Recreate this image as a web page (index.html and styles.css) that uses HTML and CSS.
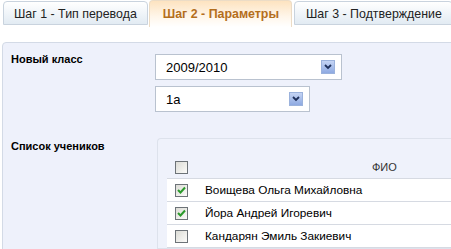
FILE: index.html
```html
<!DOCTYPE html>
<html lang="ru">
<head>
    <meta charset="UTF-8">
    <title>Перевод учеников</title>
    <link rel="stylesheet" href="styles.css">
</head>
<body>
    <div class="tabs">
        <div class="tab first">Шаг 1 - Тип перевода</div>
        <div class="tab active">Шаг 2 - Параметры</div>
        <div class="tab last">Шаг 3 - Подтверждение</div>
    </div>

    <div class="panel">
        <div class="field-label">Новый класс</div>
        <div class="controls">
            <div class="select wide">
                <span>2009/2010</span>
                <span class="arrow"><svg width="8" height="6" viewBox="0 0 8 6"><path d="M1 1 L4 4 L7 1" fill="none" stroke="#1d2f5a" stroke-width="1.8"/></svg></span>
            </div>
            <div class="select narrow">
                <span>1а</span>
                <span class="arrow"><svg width="8" height="6" viewBox="0 0 8 6"><path d="M1 1 L4 4 L7 1" fill="none" stroke="#1d2f5a" stroke-width="1.8"/></svg></span>
            </div>
        </div>

        <div class="field-label second">Список учеников</div>
        <div class="students">
            <div class="row head">
                <div class="cell-check"><span class="check"></span></div>
                <div class="cell-name">ФИО</div>
            </div>
            <div class="row">
                <div class="cell-check"><span class="check on"><svg width="9" height="8" viewBox="0 0 9 8"><path d="M1 4 L3.5 6.5 L8 1.5" fill="none" stroke="#2b9a2b" stroke-width="2"/></svg></span></div>
                <div class="cell-name">Воищева Ольга Михайловна</div>
            </div>
            <div class="row">
                <div class="cell-check"><span class="check on"><svg width="9" height="8" viewBox="0 0 9 8"><path d="M1 4 L3.5 6.5 L8 1.5" fill="none" stroke="#2b9a2b" stroke-width="2"/></svg></span></div>
                <div class="cell-name">Йора Андрей Игоревич</div>
            </div>
            <div class="row">
                <div class="cell-check"><span class="check"></span></div>
                <div class="cell-name">Кандарян Эмиль Закиевич</div>
            </div>
        </div>
    </div>
</body>
</html>
```

FILE: styles.css
```css
* {
    margin: 0;
    padding: 0;
    box-sizing: border-box;
}

body {
    font-family: 'Liberation Sans', Arial, sans-serif;
    font-size: 12px;
    color: #000;
    background: #fff;
    overflow: hidden;
}

.tabs {
    display: flex;
    align-items: flex-start;
    padding-left: 3px;
    gap: 1px;
    height: 42px;
}

.tab {
    margin-top: 1px;
    height: 24px;
    padding: 5px 10px 0;
    border: 1px solid #c9d3de;
    border-radius: 4px 4px 0 0;
    background: linear-gradient(#ffffff, #e2ebf3);
    color: #222;
    font-size: 12.4px;
    white-space: nowrap;
}

.tab.last {
    margin-left: 1px;
    padding: 5px 10px 0 11px;
}

.tab.active {
    margin-top: 0;
    height: 27px;
    padding: 6px 12px 0 13px;
    border-color: #ecdcc6;
    border-bottom: none;
    background: linear-gradient(#fde3c0, #fff6ea 60%, #ffffff);
    color: #b46e1c;
    font-weight: bold;
}

.panel {
    display: grid;
    grid-template-columns: 144px 1fr;
    align-content: start;
    row-gap: 26px;
    margin-left: 2px;
    width: 600px;
    min-height: 240px;
    padding: 11px 0 0 8px;
    border: 1px solid #d3dae6;
    border-radius: 4px 0 0 0;
    background: #eef1fb;
}

.field-label {
    font-size: 11px;
    font-weight: bold;
    margin-top: -1px;
}

.field-label.second {
    margin-top: 2px;
}

.controls {
    display: flex;
    flex-direction: column;
    gap: 6px;
}

.select {
    display: flex;
    align-items: center;
    justify-content: space-between;
    height: 26px;
    padding: 0 6px 0 10px;
    border: 1px solid #b9c2cf;
    background: #fff;
    font-size: 13px;
}

.select.wide {
    width: 187px;
}

.select.narrow {
    width: 155px;
}

.arrow {
    display: flex;
    align-items: center;
    justify-content: center;
    width: 14px;
    height: 14px;
    border: 1px solid #9bb2dc;
    background: linear-gradient(#c4d4f4, #8eaae2);
}

.students {
    margin-left: 2px;
    padding: 17px 0 0 9px;
    border: 1px solid #dde2ec;
    border-right: none;
    border-radius: 4px 0 0 0;
    background: #eff2fb;
}

.row {
    display: flex;
    align-items: center;
    height: 23px;
    background: #fff;
    border-bottom: 1px solid #d6dae2;
    font-size: 11.8px;
}

.row.head {
    background: transparent;
    color: #333;
    font-size: 11px;
}

.cell-check {
    width: 38px;
    padding-left: 8px;
    display: flex;
}

.cell-name {
    flex: 1;
}

.head .cell-name {
    padding-left: 167px;
}

.check {
    display: flex;
    align-items: center;
    justify-content: center;
    width: 13px;
    height: 13px;
    border: 1px solid #6d7378;
    background: linear-gradient(135deg, #dcdcd6, #fbfbf9);
}
```
